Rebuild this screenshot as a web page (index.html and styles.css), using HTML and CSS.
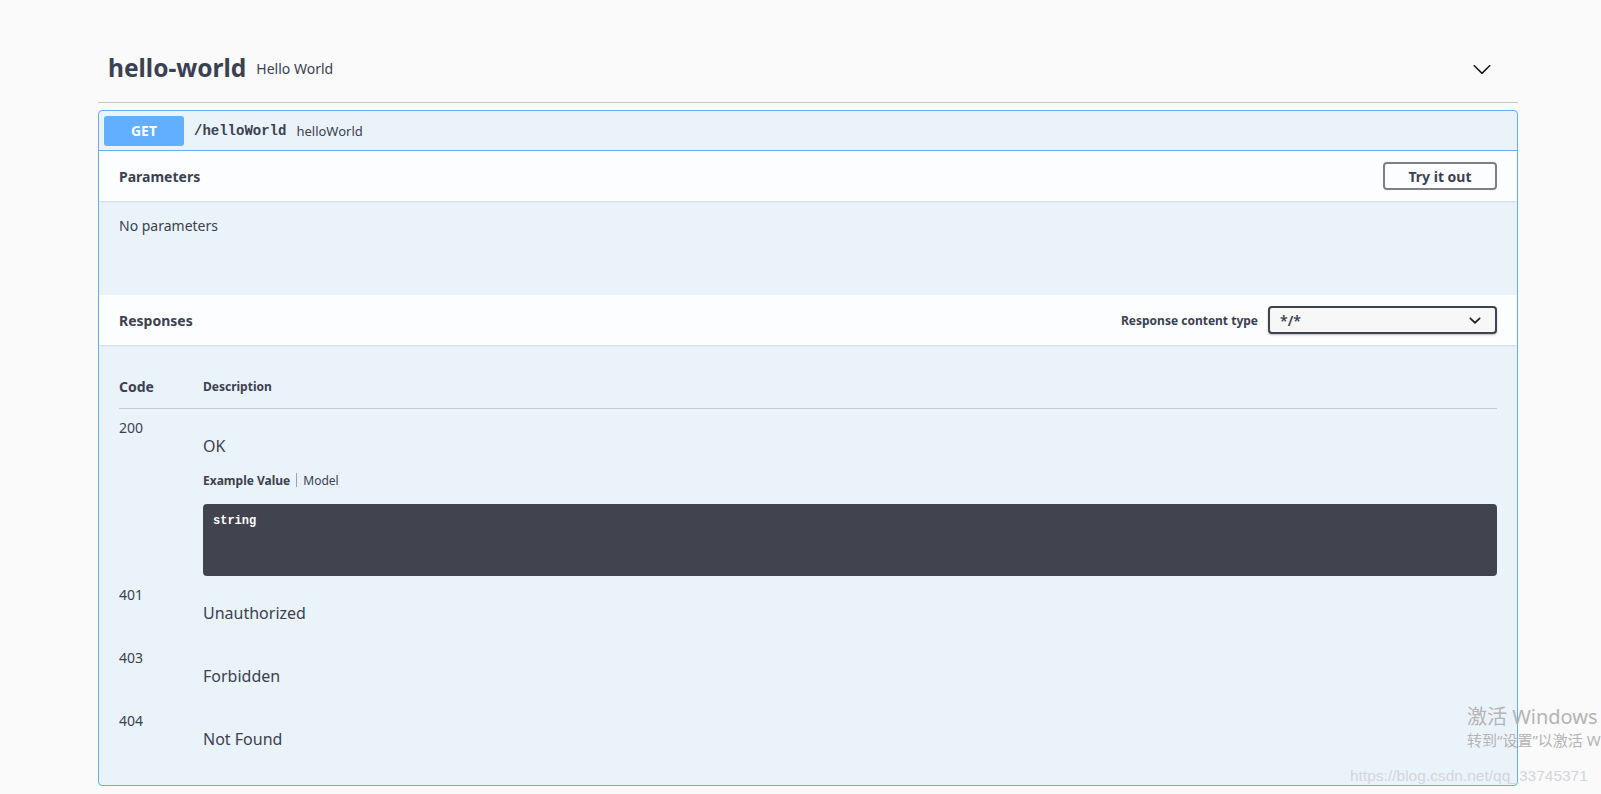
FILE: index.html
```html
<!DOCTYPE html>
<html lang="en">
<head>
<meta charset="utf-8">
<title>hello-world</title>
<link rel="stylesheet" href="styles.css">
</head>
<body>
<div class="wrapper">
  <div class="tag">
    <span class="tag-name">hello-world</span>
    <span class="tag-desc">Hello World</span>
    <span class="tag-spacer"></span>
    <svg class="tag-arrow" width="20" height="20" viewBox="0 0 20 20"><path d="M17.418 6.109c.272-.268.709-.268.979 0s.271.701 0 .969l-7.908 7.83c-.27.268-.707.268-.979 0l-7.908-7.830c-.27-.268-.27-.701 0-.969.271-.268.709-.268.979 0L10 13.25l7.418-7.141z" fill="#111"/></svg>
  </div>

  <div class="opblock">
    <div class="summary">
      <span class="method">GET</span>
      <span class="path">/helloWorld</span>
      <span class="summary-desc">helloWorld</span>
    </div>

    <div class="section-header">
      <span class="section-title">Parameters</span>
      <span class="try-btn">Try it out</span>
    </div>
    <div class="params-body">No parameters</div>

    <div class="section-header">
      <span class="section-title">Responses</span>
      <div class="content-type">
        <span class="ct-label">Response content type</span>
        <div class="select">
          <span>*/*</span>
          <svg width="12" height="12" viewBox="0 0 20 20"><path d="M13.418 7.859c.271-.268.709-.268.978 0 .27.268.272.701 0 .969l-3.908 3.83c-.27.268-.707.268-.979 0l-3.908-3.830c-.27-.267-.27-.701 0-.969.271-.268.709-.268.978 0L10 11l3.418-3.141z" fill="#222" transform="translate(-10 -9.5) scale(2)"/></svg>
        </div>
      </div>
    </div>

    <div class="responses-inner">
      <div class="resp-head">
        <span class="col-code">Code</span>
        <span class="col-desc head-desc">Description</span>
      </div>

      <div class="resp-row">
        <span class="col-code code-num">200</span>
        <div class="col-desc">
          <p class="desc-text first">OK</p>
          <div class="example-tabs">
            <span class="tab-active">Example Value</span>
            <span class="tab-sep"></span>
            <span class="tab">Model</span>
          </div>
          <div class="code-block">string</div>
        </div>
      </div>

      <div class="resp-row">
        <span class="col-code code-num">401</span>
        <div class="col-desc"><p class="desc-text">Unauthorized</p></div>
      </div>
      <div class="resp-row">
        <span class="col-code code-num">403</span>
        <div class="col-desc"><p class="desc-text">Forbidden</p></div>
      </div>
      <div class="resp-row">
        <span class="col-code code-num">404</span>
        <div class="col-desc"><p class="desc-text">Not Found</p></div>
      </div>
    </div>
  </div>
</div>

<div class="win-mark">
  <div class="win-big">激活 Windows</div>
  <div class="win-small">转到“设置”以激活 W</div>
</div>
<div class="blog-mark">https://blog.csdn.net/qq_33745371</div>
</body>
</html>
```

FILE: styles.css
```css
html, body {
  margin: 0;
  padding: 0;
}
body {
  background: #fafafa;
  font-family: "Noto Sans", "Noto Sans CJK SC", sans-serif;
  color: #3b4151;
  width: 1601px;
  height: 794px;
  overflow: hidden;
  position: relative;
}
.wrapper {
  padding: 35px 0 0 98px;
  width: 1420px;
}
.tag {
  display: flex;
  align-items: center;
  height: 67px;
  padding: 0 26px 0 10px;
  border-bottom: 1px solid #c4c6cb;
}
.tag-name {
  font-size: 24.5px;
  font-weight: 700;
  line-height: 30px;
  margin-top: -2px;
}
.tag-desc {
  font-size: 14px;
  margin-left: 10px;
}
.tag-spacer {
  flex: 1;
}
.tag-arrow {
  display: block;
}

.opblock {
  margin-top: 7px;
  border: 1px solid #61affe;
  border-radius: 4px;
  background: #ebf3fa;
  height: 676px;
  box-sizing: border-box;
}
.summary {
  display: flex;
  align-items: center;
  padding: 5px;
  height: 40px;
  box-sizing: border-box;
  border-bottom: 1px solid #61affe;
}
.method {
  width: 80px;
  height: 30px;
  line-height: 30px;
  text-align: center;
  background: #61affe;
  color: #fff;
  font-size: 14px;
  font-weight: 700;
  border-radius: 3px;
}
.path {
  font-family: "Liberation Mono", monospace;
  font-size: 14px;
  font-weight: 700;
  padding: 0 10px;
  color: #3b4151;
}
.summary-desc {
  font-size: 13px;
}

.section-header {
  display: flex;
  align-items: center;
  justify-content: space-between;
  height: 50px;
  padding: 0 20px;
  background: rgba(255, 255, 255, 0.8);
  box-shadow: 0 1px 2px rgba(0, 0, 0, 0.1);
  position: relative;
}
.section-title {
  font-size: 14px;
  font-weight: 700;
}
.try-btn {
  width: 114px;
  height: 28px;
  box-sizing: border-box;
  border: 2px solid #808080;
  border-radius: 4px;
  font-size: 14px;
  font-weight: 700;
  display: flex;
  align-items: center;
  justify-content: center;
}
.params-body {
  height: 94px;
  box-sizing: border-box;
  padding: 15px 20px;
  font-size: 14px;
  line-height: 20px;
}
.content-type {
  display: flex;
  align-items: center;
}
.ct-label {
  font-size: 12px;
  font-weight: 700;
  margin-right: 10px;
}
.select {
  width: 229px;
  height: 28px;
  box-sizing: border-box;
  border: 2px solid #41444e;
  border-radius: 4px;
  background: #f7f7f7;
  box-shadow: 0 1px 2px rgba(0, 0, 0, 0.25);
  display: flex;
  align-items: center;
  justify-content: space-between;
  padding: 0 14px 0 10px;
  font-size: 14px;
  font-weight: 600;
}
.select svg {
  display: block;
}

.responses-inner {
  padding: 20px;
}
.resp-head {
  display: flex;
  align-items: center;
  padding: 12px 0 11px;
  border-bottom: 1px solid #c6cad3;
}
.col-code {
  width: 84px;
  flex: none;
}
.resp-head .col-code {
  font-size: 14px;
  font-weight: 700;
  line-height: 20px;
}
.head-desc {
  font-size: 12px;
  font-weight: 700;
  line-height: 20px;
}
.col-desc {
  flex: 1;
}
.resp-row {
  display: flex;
  align-items: flex-start;
  padding-top: 11px;
}
.code-num {
  font-size: 14px;
  line-height: 16px;
}
.desc-text {
  margin: 16px 0 15px;
  font-size: 16px;
  line-height: 21px;
}
.desc-text.first {
  margin-bottom: 0;
}
.example-tabs {
  display: flex;
  align-items: center;
  margin-top: 15px;
  height: 16px;
  font-size: 12px;
}
.tab-active {
  font-weight: 700;
}
.tab-sep {
  width: 1px;
  height: 14px;
  background: #a0a4ad;
  margin: 0 6px;
}
.code-block {
  margin-top: 16px;
  height: 72px;
  box-sizing: border-box;
  background: #41444e;
  border-radius: 4px;
  padding: 10px;
  color: #fff;
  font-family: "Liberation Mono", monospace;
  font-size: 12px;
  font-weight: 700;
  line-height: 14px;
}

.win-mark {
  position: absolute;
  left: 1467px;
  top: 704px;
  color: #b4b4b4;
  white-space: nowrap;
}
.win-big {
  font-size: 20px;
  line-height: 26px;
}
.win-small {
  font-size: 15px;
  line-height: 20px;
}
.blog-mark {
  position: absolute;
  left: 1350px;
  top: 767px;
  font-family: "Liberation Sans", sans-serif;
  font-size: 15.5px;
  color: #d3d6db;
  white-space: nowrap;
}
```
